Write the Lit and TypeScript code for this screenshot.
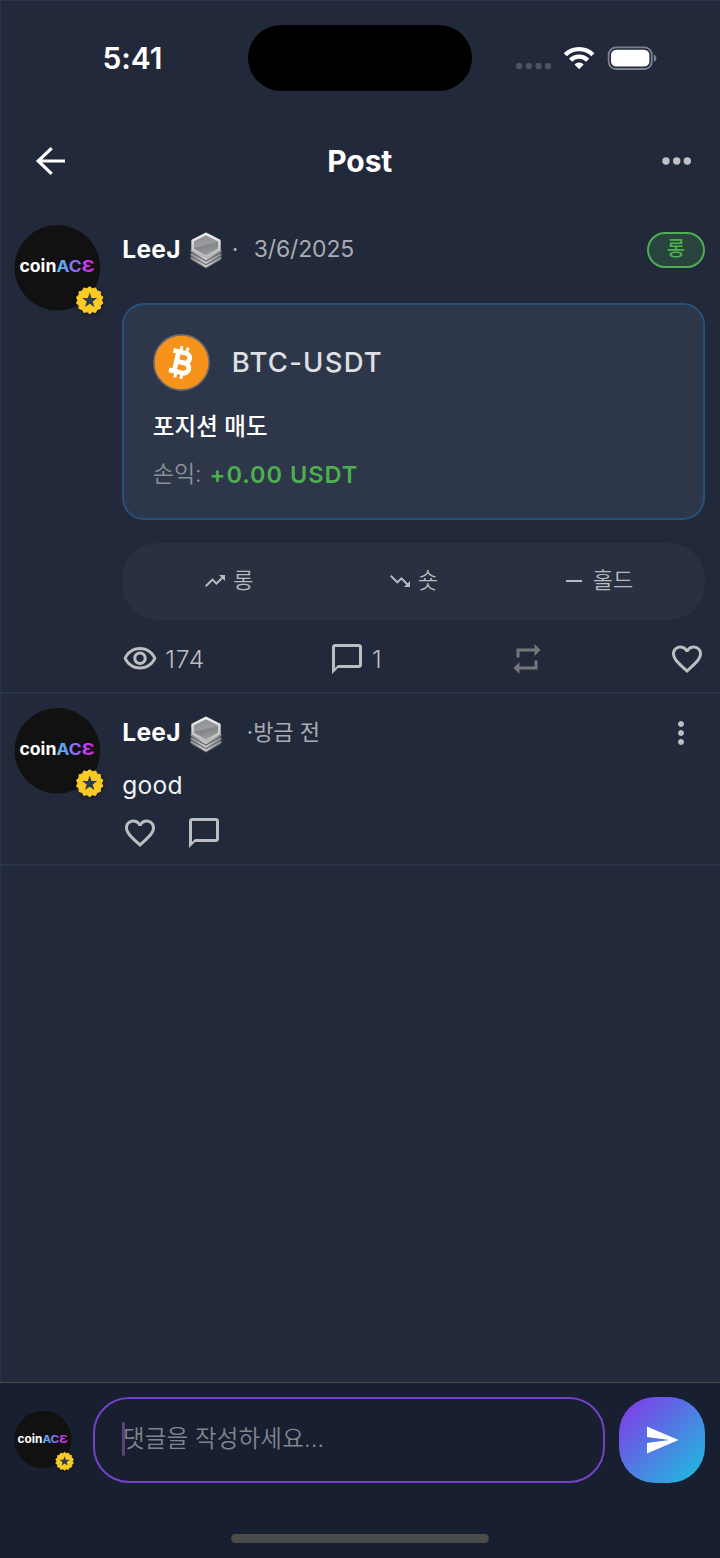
import { LitElement, html, svg, css } from "lit";
import { customElement, property } from "lit/decorators.js";

const burst = (cx: number, cy: number, outer: number, inner: number, points: number): string =>
  Array.from({ length: points * 2 }, (_, i) => {
    const r = i % 2 ? inner : outer;
    const a = (Math.PI * i) / points - Math.PI / 2;
    return `${(cx + r * Math.cos(a)).toFixed(2)},${(cy + r * Math.sin(a)).toFixed(2)}`;
  }).join(" ");

const ICONS: Record<string, string> = {
  eye: "M12 6c3.79 0 7.17 2.13 8.82 5.5C19.17 14.87 15.79 17 12 17s-7.17-2.13-8.82-5.5C4.83 8.13 8.21 6 12 6m0-2C7 4 2.73 7.11 1 11.5 2.73 15.89 7 19 12 19s9.27-3.11 11-7.5C21.27 7.11 17 4 12 4zm0 5c1.38 0 2.5 1.12 2.5 2.5S13.38 14 12 14s-2.5-1.12-2.5-2.5S10.62 9 12 9m0-2c-2.48 0-4.5 2.02-4.5 4.5S9.52 16 12 16s4.5-2.02 4.5-4.5S14.48 7 12 7z",
  chat: "M20 2H4c-1.1 0-2 .9-2 2v18l4-4h14c1.1 0 2-.9 2-2V4c0-1.1-.9-2-2-2zm0 14H6l-2 2V4h16v12z",
  heart: "M16.5 3c-1.74 0-3.41.81-4.5 2.09C10.91 3.81 9.24 3 7.5 3 4.42 3 2 5.42 2 8.5c0 3.78 3.4 6.86 8.55 11.54L12 21.35l1.45-1.32C18.6 15.36 22 12.28 22 8.5 22 5.42 19.58 3 16.5 3zm-4.4 15.55l-.1.1-.1-.1C7.14 14.24 4 11.39 4 8.5 4 6.5 5.5 5 7.5 5c1.54 0 3.04.99 3.57 2.36h1.87C13.46 5.99 14.96 5 16.5 5c2 0 3.5 1.5 3.5 3.5 0 2.89-3.14 5.74-7.9 10.05z",
  repeat: "M7 7h10v3l4-4-4-4v3H5v6h2V7zm10 10H7v-3l-4 4 4 4v-3h12v-6h-2v4z",
  up: "M16 6l2.29 2.29-4.88 4.88-4-4L2 16.59 3.41 18l6-6 4 4 6.3-6.29L22 12V6z",
  down: "M16 18l2.29-2.29-4.88-4.88-4 4L2 7.41 3.41 6l6 6 4-4 6.3 6.29L22 12v6z",
  flat: "M4 11h16v2H4z",
  send: "M2.01 21L23 12 2.01 3 2 10l15 2-15 2z",
  moreV: "M12 8c1.1 0 2-.9 2-2s-.9-2-2-2-2 .9-2 2 .9 2 2 2zm0 2c-1.1 0-2 .9-2 2s.9 2 2 2 2-.9 2-2-.9-2-2-2zm0 6c-1.1 0-2 .9-2 2s.9 2 2 2 2-.9 2-2-.9-2-2-2z",
};

const icon = (name: string, size = 36) => html`
  <svg width=${size} height=${size} viewBox="0 0 24 24" fill="currentColor" aria-hidden="true">
    <path d=${ICONS[name]}></path>
  </svg>`;

@customElement("user-avatar")
class UserAvatar extends LitElement {
  @property({ type: Number }) size = 86;

  static styles = css`
    :host { display: block; flex: none; line-height: 0; }
    svg { display: block; overflow: visible; }
    .mark { font-family: "Inter", sans-serif; font-weight: 700; }
    .badge { filter: drop-shadow(0 1px 2px rgba(0, 0, 0, 0.45)); }
  `;

  render() {
    return html`
      <svg width=${this.size} height=${this.size} viewBox="0 0 86 86" role="img" aria-label="coinACE">
        <defs>
          <linearGradient id="ace" gradientUnits="userSpaceOnUse" x1="43" y1="0" x2="80" y2="0">
            <stop offset="0" stop-color="#4cc3f2"></stop>
            <stop offset="0.5" stop-color="#8a6cf0"></stop>
            <stop offset="0.8" stop-color="#c63cf0"></stop>
            <stop offset="1" stop-color="#e41be0"></stop>
          </linearGradient>
        </defs>
        <circle cx="43.3" cy="42.7" r="42.8" fill="#111112"></circle>
        <text class="mark" x="5.4" y="47.2" font-size="17.5" fill="#fff" textLength="37" lengthAdjust="spacingAndGlyphs">coin</text>
        <text class="mark" x="42.6" y="47.2" font-size="15.8" fill="url(#ace)" textLength="25" lengthAdjust="spacingAndGlyphs">AC</text>
        <text class="mark" x="67.4" y="47.2" font-size="15.8" fill="url(#ace)" textLength="13.4" lengthAdjust="spacingAndGlyphs">Ɛ</text>
        <g class="badge">
          <polygon points=${burst(75.7, 75.2, 13.6, 11.8, 14)} fill="#fbcb24" stroke="#fbcb24" stroke-width="1" stroke-linejoin="round"></polygon>
          <polygon points=${burst(75.7, 75.5, 7.9, 3.2, 5)} fill="#2b3d4f"></polygon>
        </g>
      </svg>`;
  }
}

@customElement("tier-icon")
class TierIcon extends LitElement {
  static styles = css`
    :host { display: block; flex: none; }
    svg { display: block; }
  `;

  render() {
    const layer = (dy: number) => svg`
      <path d=${`M0.6 ${16 + dy}L16 ${24.4 + dy}L31.4 ${16 + dy}V${18.4 + dy}L16 ${27.4 + dy}L0.6 ${18.4 + dy}Z`} fill="url(#edge)"></path>
      <path d=${`M0.8 ${18.7 + dy}L16 ${27.6 + dy}L31.2 ${18.7 + dy}`} fill="none" stroke="#606266" stroke-width="0.9"></path>`;
    return html`
      <svg width="32" height="37" viewBox="0 0 32 37" aria-hidden="true">
        <defs>
          <linearGradient id="edge" x1="0" x2="1" y1="0" y2="0">
            <stop offset="0" stop-color="#8c8c8f"></stop>
            <stop offset="0.45" stop-color="#cacacc"></stop>
            <stop offset="1" stop-color="#8c8c8f"></stop>
          </linearGradient>
          <linearGradient id="top" x1="0" x2="0.3" y1="0" y2="1">
            <stop offset="0" stop-color="#88898c"></stop>
            <stop offset="0.55" stop-color="#9b9c9e"></stop>
            <stop offset="0.62" stop-color="#838487"></stop>
            <stop offset="1" stop-color="#9c9d9f"></stop>
          </linearGradient>
          <linearGradient id="rim" x1="0" x2="0" y1="0" y2="1">
            <stop offset="0" stop-color="#efeff0"></stop>
            <stop offset="1" stop-color="#b9b9bb"></stop>
          </linearGradient>
        </defs>
        <path d="M2 16V27L16 35.5L30 27V16Z" fill="#6a6c70"></path>
        ${layer(8.6)}${layer(5)}${layer(1.4)}
        <path d="M16 1.8L29.4 8.6V17.4L16 24.8L2.6 17.4V8.6Z" fill="url(#top)" stroke="url(#rim)" stroke-width="2.6" stroke-linejoin="round"></path>
      </svg>`;
  }
}

@customElement("app-root")
class AppRoot extends LitElement {
  static styles = css`
    :host {
      display: block;
      font-family: "Inter", "Noto Sans CJK KR", sans-serif;
      color: #fff;
    }
    * { box-sizing: border-box; }
    svg { display: block; flex: none; }
    .screen {
      width: 720px;
      height: 1558px;
      display: flex;
      flex-direction: column;
      background: #22293a;
      box-shadow: inset 0 2px 0 -1px #2c384b, inset 1px 0 0 #26344a;
      overflow: hidden;
      white-space: nowrap;
    }
    .status {
      height: 107px;
      padding: 25px 63px 0 102.5px;
      display: grid;
      grid-template-columns: 145.5px 224px 1fr;
      align-items: start;
    }
    .time { font-size: 30px; font-weight: 600; line-height: 66px; letter-spacing: -0.1px; }
    .island { height: 65.5px; border-radius: 33px; background: #000; }
    .signals { height: 66px; display: flex; align-items: center; justify-content: flex-end; }
    .header {
      height: 107px;
      padding: 0 28px 0 35px;
      display: grid;
      grid-template-columns: 80px 1fr 80px;
      align-items: center;
    }
    .title { text-align: center; font-size: 30px; font-weight: 700; line-height: 40px; letter-spacing: -0.1px; padding-top: 1px; margin: 0 7.5px 0 0; }
    .more { justify-self: end; }
    .entry { display: flex; gap: 22px; padding: 0 15px 0 14.3px; border-bottom: 2px solid #2a3447; }
    .post { height: 479.5px; padding-top: 10.5px; }
    .comment { height: 172.5px; padding-top: 14.5px; }
    .body { flex: 1; min-width: 0; }
    .byline { display: flex; align-items: center; height: 50px; }
    .name { font-size: 24.5px; font-weight: 700; width: 67.5px; letter-spacing: 0.3px; margin-top: -2px; }
    tier-icon { margin-top: 2px; }
    .dim { font-size: 23px; font-weight: 400; color: #a9acb2; margin-top: -2px; }
    .dot { width: 32px; padding-left: 10px; }
    .date { letter-spacing: -0.15px; }
    .ago { padding-left: 25px; font-size: 22px; margin-top: -6px; }
    .spacer { flex: 1; }
    .tag {
      width: 58px; height: 36px; border: 2px solid #4caf50; border-radius: 18px;
      background: #29443f; color: #4caf50; font-size: 20px; font-weight: 500;
      line-height: 31px; text-align: center;
    }
    .card {
      margin-top: 28.5px;
      height: 217px;
      padding: 29px 28px 0 28.5px;
      border: 2px solid #27507a;
      border-radius: 22px;
      background: #2d3749;
    }
    .pair { display: flex; align-items: center; gap: 21px; font-size: 27.5px; font-weight: 500; letter-spacing: 1.2px; color: #dfe0e3; height: 57px; }
    .pair span { margin-top: -1px; }
    .action { margin-top: 18px; font-size: 23.5px; font-weight: 500; line-height: 36px; letter-spacing: 0.1px; }
    .pnl { display: flex; gap: 8px; margin-top: 11px; line-height: 36px; font-size: 23px; color: #8c9099; font-weight: 350; }
    .gain { color: #4caf50; font-weight: 600; font-size: 23.5px; letter-spacing: 1px; padding-top: 1px; }
    .votes {
      margin-top: 22.5px; height: 77.5px; border-radius: 36px; background: #283042;
      display: flex; align-items: center; color: #b9bbbf; font-size: 22px; font-weight: 350;
    }
    .vote { display: flex; align-items: center; gap: 6px; width: 184.5px; line-height: 36px; }
    .vote span { margin-top: -2px; }
    .vote:first-child { margin-left: 81px; }
    .vote:last-child { width: auto; margin-left: -10.5px; gap: 7px; }
    .stats { display: flex; justify-content: space-between; align-items: center; height: 77px; color: #bdbec1; }
    .stat { display: flex; align-items: center; gap: 7px; font-size: 24.5px; font-weight: 350; padding-top: 1px; letter-spacing: 0.8px; }
    .muted { color: #757678; margin-left: 3px; }
    .text { font-size: 24.5px; line-height: 34px; margin-top: 10px; letter-spacing: 0.3px; color: #f1f2f5; }
    .actions { display: flex; gap: 28px; margin-top: 12.5px; color: #bdbec1; }
    .kebab { color: #bdbec1; margin-right: 6.5px; }
    .fill { flex: 1; }
    .composer {
      height: 176px; padding: 14px 14.5px 0 14.3px; border-top: 1.5px solid #46504f; background: #171f30;
      display: flex; flex-direction: column; justify-content: space-between;
    }
    .row { display: flex; align-items: center; }
    .input {
      width: 512px; height: 85.5px; margin: 0 14.5px 0 21.2px; padding-left: 27px;
      border: 2px solid #7442c6; border-radius: 36px; display: flex; align-items: center;
      font-size: 23.5px; font-weight: 350; color: #80848b;
    }
    .caret { width: 3.5px; height: 34px; border-radius: 2px; background: #584476; margin: -2px -2.5px 0 0; flex: none; }
    .hint { margin-top: -5px; letter-spacing: 0.15px; }
    .send {
      width: 86px; height: 85.5px; border-radius: 36px; display: grid; place-items: center;
      background: linear-gradient(135deg, #7a45e8 12%, #22b7dd 92%);
    }
    .home { width: 258px; height: 9px; border-radius: 5px; background: #4a4c4c; align-self: center; margin-bottom: 15px; }
  `;

  private vote(name: string, label: string) {
    return html`<div class="vote">${icon(name, 24)}<span>${label}</span></div>`;
  }

  render() {
    return html`
      <div class="screen">
        <div class="status">
          <div class="time">5:41</div>
          <div class="island"></div>
          <div class="signals">
            <svg width="142" height="26" viewBox="515 45 142 26" aria-hidden="true">
              <g fill="#4b5261">
                ${[519, 528.7, 538.4, 548].map((x) => svg`<rect x=${x - 3} y="63" width="6.2" height="6.2" rx="2.4"></rect>`)}
              </g>
              <g fill="none" stroke="#fff" stroke-width="4.4">
                <path d="M565.3 54.8A19.5 19.5 0 0 1 592.9 54.8"></path>
                <path d="M570.6 60.2A12 12 0 0 1 587.6 60.2"></path>
              </g>
              <path d="M574.5 64.4a6.6 6.6 0 0 1 9.2 0L579.1 69.2z" fill="#fff"></path>
              <rect x="608.6" y="47.4" width="43.2" height="21.6" rx="7.4" fill="none" stroke="#7d8290" stroke-width="1.8"></rect>
              <rect x="611" y="49.8" width="38.4" height="16.8" rx="5.2" fill="#fff"></rect>
              <path d="M653.8 54.6c3.4 1.5 3.4 6 0 7.4z" fill="#7d8290"></path>
            </svg>
          </div>
        </div>

        <div class="header">
          <svg width="32" height="30" viewBox="35 145.5 32 30" fill="none" stroke="#fff" stroke-width="3.2" aria-hidden="true">
            <path d="M65 160.5H38.5M51.7 147.7L38.2 160.5L51.7 173.3"></path>
          </svg>
          <div class="title">Post</div>
          <svg class="more" width="30" height="8" viewBox="0 0 30 8" fill="#bfc1c4" aria-hidden="true">
            <circle cx="4" cy="4" r="3.7"></circle><circle cx="14.7" cy="4" r="3.7"></circle><circle cx="25.3" cy="4" r="3.7"></circle>
          </svg>
        </div>

        <div class="entry post">
          <user-avatar></user-avatar>
          <div class="body">
            <div class="byline">
              <span class="name">LeeJ</span>
              <tier-icon></tier-icon>
              <span class="dim dot">·</span>
              <span class="dim date">3/6/2025</span>
              <span class="spacer"></span>
              <span class="tag">롱</span>
            </div>
            <div class="card">
              <div class="pair">
                <svg width="58" height="58" viewBox="0 0 58 58" aria-hidden="true">
                  <circle cx="28.5" cy="28.5" r="27.6" fill="#f7931a" stroke="#6c6d70" stroke-width="1.6"></circle>
                  <g transform="translate(28.5 28.5) rotate(13)" fill="none" stroke="#fff" stroke-width="4.8">
                    <path d="M-10.5 -10H2.2A4.9 4.9 0 0 1 2.2 -0.2H-5M-10.5 10H3.4A5.1 5.1 0 0 0 3.4 -0.2M-5.2 -10V10"></path>
                    <path d="M-3.2 -16V-11M3 -16V-11M-3.2 11V16M3 11V16" stroke-width="3"></path>
                  </g>
                </svg>
                <span>BTC-USDT</span>
              </div>
              <div class="action">포지션 매도</div>
              <div class="pnl"><span>손익:</span><span class="gain">+0.00 USDT</span></div>
            </div>
            <div class="votes">
              ${this.vote("up", "롱")}${this.vote("down", "숏")}${this.vote("flat", "홀드")}
            </div>
            <div class="stats">
              <span class="stat">${icon("eye")}174</span>
              <span class="stat">${icon("chat")}1</span>
              <span class="stat muted">${icon("repeat")}</span>
              <span class="stat">${icon("heart")}</span>
            </div>
          </div>
        </div>

        <div class="entry comment">
          <user-avatar></user-avatar>
          <div class="body">
            <div class="byline">
              <span class="name">LeeJ</span>
              <tier-icon></tier-icon>
              <span class="dim ago">·방금 전</span>
              <span class="spacer"></span>
              <span class="kebab">${icon("moreV")}</span>
            </div>
            <div class="text">good</div>
            <div class="actions">${icon("heart")}${icon("chat")}</div>
          </div>
        </div>

        <div class="fill"></div>

        <div class="composer">
          <div class="row">
            <user-avatar .size=${57.5}></user-avatar>
            <div class="input"><span class="caret"></span><span class="hint">댓글을 작성하세요...</span></div>
            <div class="send">${icon("send")}</div>
          </div>
          <div class="home"></div>
        </div>
      </div>`;
  }
}
